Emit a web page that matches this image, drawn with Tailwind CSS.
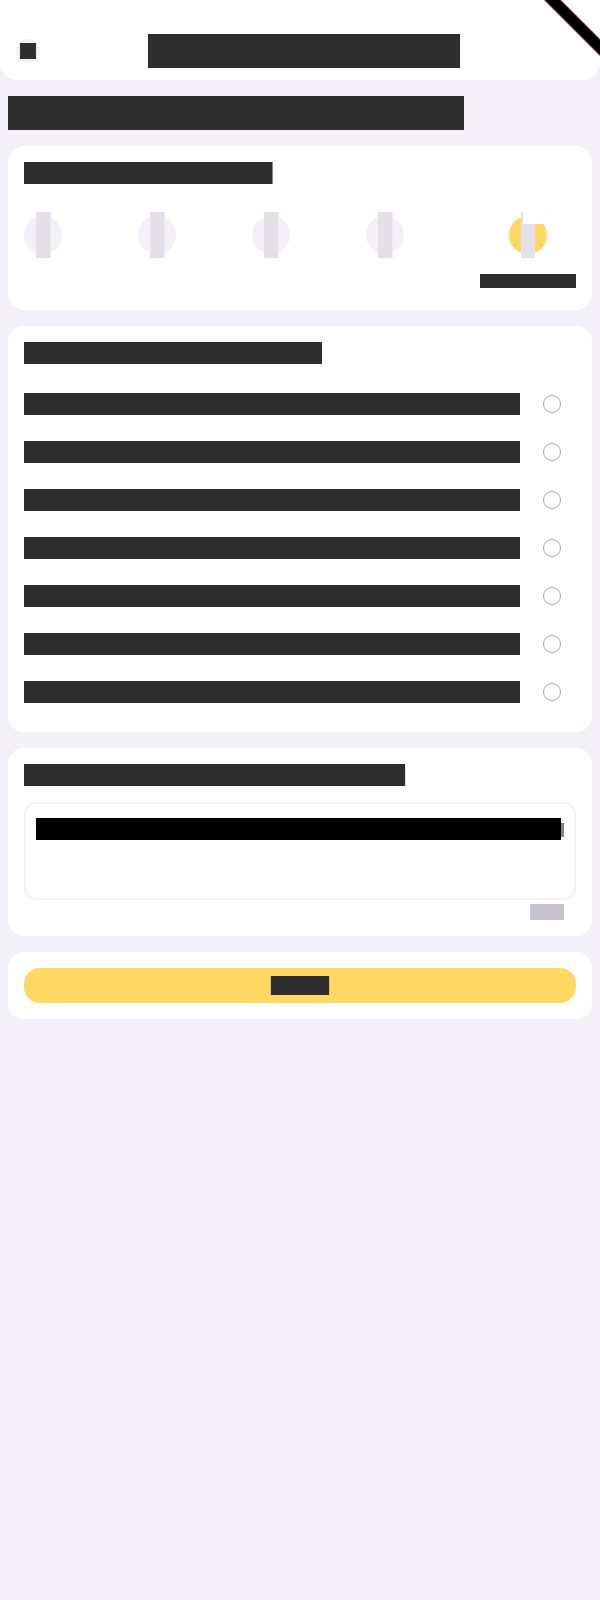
<!DOCTYPE html>
<html lang="en">
<head>
<meta charset="utf-8">
<title>Feedback</title>
<script src="https://cdn.jsdelivr.net/npm/@tailwindcss/browser@4"></script>
</head>
<body class="min-h-screen bg-[#f3f0f8] font-['Roboto',sans-serif]">
<div class="relative w-[600px]">
  <header class="flex h-20 items-start rounded-b-[18px] bg-white pl-4">
    <div class="mt-[39px] flex size-6 items-center justify-center rounded-full bg-[#f3f0f8]"><div class="size-4 bg-[#2e2e2e]"></div></div>
    <div class="mt-[34px] ml-[108px] h-[34px] w-[312px] bg-[#2e2e2e]"></div>
  </header>
  <svg class="absolute top-0 right-0" width="60" height="60" viewBox="0 0 60 60"><path d="M3.500 -1H19.500L61 40.500V56.500Z" fill="#000" stroke="#a22" stroke-width=".8"/></svg>

  <main class="flex flex-col gap-4 px-2 pt-4">
    <div class="h-[34px] w-[456px] bg-[#2e2e2e]"></div>

    <section class="h-[164px] rounded-2xl bg-white p-4">
      <div class="h-[22px] w-[249px] border-r border-[#8a8a8a] bg-[#2e2e2e]"></div>
      <div class="mt-7 flex justify-between">
        <div class="flex w-[380px] justify-between">
          <div class="flex h-[46px] w-[38px] items-center"><div class="flex size-[38px] items-center rounded-full bg-[#f3f0f8] pl-3"><div class="h-[46px] w-[15px] shrink-0 border-r border-[#efebf2] bg-[#e5e0e8]"></div></div></div>
          <div class="flex h-[46px] w-[38px] items-center"><div class="flex size-[38px] items-center rounded-full bg-[#f3f0f8] pl-3"><div class="h-[46px] w-[15px] shrink-0 border-r border-[#efebf2] bg-[#e5e0e8]"></div></div></div>
          <div class="flex h-[46px] w-[38px] items-center"><div class="flex size-[38px] items-center rounded-full bg-[#f3f0f8] pl-3"><div class="h-[46px] w-[15px] shrink-0 border-r border-[#efebf2] bg-[#e5e0e8]"></div></div></div>
          <div class="flex h-[46px] w-[38px] items-center"><div class="flex size-[38px] items-center rounded-full bg-[#f3f0f8] pl-3"><div class="h-[46px] w-[15px] shrink-0 border-r border-[#efebf2] bg-[#e5e0e8]"></div></div></div>
        </div>
        <div class="flex w-24 flex-col items-center gap-4">
          <div class="relative flex h-[46px] w-[38px] items-center">
            <div class="flex size-[38px] items-center justify-center rounded-full bg-[#ffd863]"><div class="h-[46px] w-[14px] shrink-0 bg-[#e5e0e8]"></div></div>
            <div class="absolute -top-1 left-[14px] h-4 w-6 bg-white"></div>
            <div class="absolute -top-1 left-[14px] h-[5px] w-px bg-[#fff8e2]"></div>
            <div class="absolute -top-[2px] left-[38px] h-1 w-px bg-[#fff5d8]"></div>
          </div>
          <div class="h-[14px] w-24 bg-[#2e2e2e]"></div>
        </div>
      </div>
    </section>

    <section class="h-[406px] rounded-2xl bg-white p-4">
      <div class="h-[22px] w-[298px] bg-[#2e2e2e]"></div>
      <div class="mt-[29px] flex flex-col gap-[26px]">
        <div class="flex h-[22px] items-center justify-between pr-[15px]"><div class="h-[22px] w-[496px] bg-[#2e2e2e]"></div><div class="size-[18px] rounded-full border border-[#aaa]"></div></div>
        <div class="flex h-[22px] items-center justify-between pr-[15px]"><div class="h-[22px] w-[496px] bg-[#2e2e2e]"></div><div class="size-[18px] rounded-full border border-[#aaa]"></div></div>
        <div class="flex h-[22px] items-center justify-between pr-[15px]"><div class="h-[22px] w-[496px] bg-[#2e2e2e]"></div><div class="size-[18px] rounded-full border border-[#aaa]"></div></div>
        <div class="flex h-[22px] items-center justify-between pr-[15px]"><div class="h-[22px] w-[496px] bg-[#2e2e2e]"></div><div class="size-[18px] rounded-full border border-[#aaa]"></div></div>
        <div class="flex h-[22px] items-center justify-between pr-[15px]"><div class="h-[22px] w-[496px] bg-[#2e2e2e]"></div><div class="size-[18px] rounded-full border border-[#aaa]"></div></div>
        <div class="flex h-[22px] items-center justify-between pr-[15px]"><div class="h-[22px] w-[496px] bg-[#2e2e2e]"></div><div class="size-[18px] rounded-full border border-[#aaa]"></div></div>
        <div class="flex h-[22px] items-center justify-between pr-[15px]"><div class="h-[22px] w-[496px] bg-[#2e2e2e]"></div><div class="size-[18px] rounded-full border border-[#aaa]"></div></div>
      </div>
    </section>

    <section class="h-[188px] rounded-2xl bg-white p-4">
      <div class="h-[22px] w-[382px] border-r border-[#e6e6e6] bg-[#2e2e2e]"></div>
      <div class="mt-4 flex h-[98px] items-start rounded-xl border-2 border-[#f3f0f8] pt-[14px] pl-[10px]">
        <div class="h-[22px] w-[525px] bg-black"></div>
        <div class="mt-[5px] h-[14px] w-[3px] bg-[#858388]"></div>
      </div>
      <div class="mt-1 mr-3 ml-auto h-4 w-[34px] bg-[#c9c2cf]"></div>
    </section>

    <section class="h-[67px] rounded-2xl bg-white p-4">
      <div class="flex h-[35px] items-center justify-center rounded-2xl bg-[#ffd863]"><div class="h-[19px] w-[60px] border-x border-[#dfbf5e] bg-[#2e2e2e]"></div></div>
    </section>
  </main>
</div>
</body>
</html>
